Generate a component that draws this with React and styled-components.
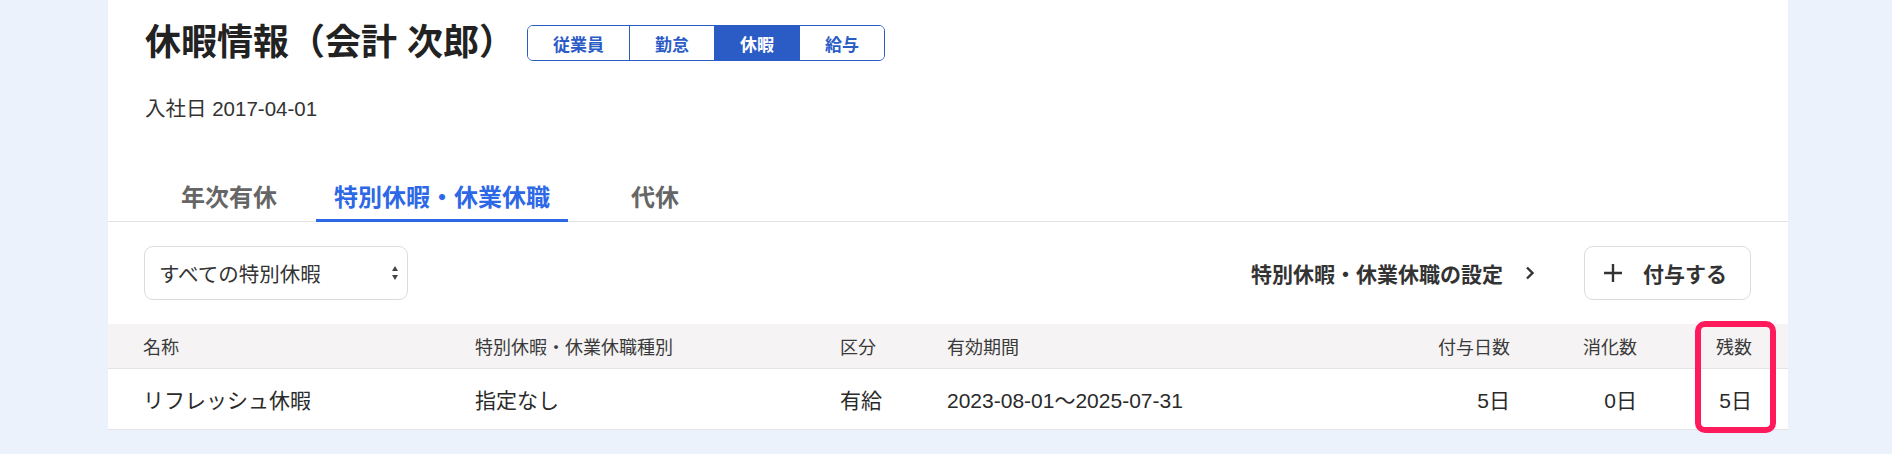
import React from "react";
import styled, { createGlobalStyle } from "styled-components";

const GlobalStyle = createGlobalStyle`
  html, body {
    margin: 0;
    padding: 0;
    background: #ebf2fc;
    font-family: "Liberation Sans", "Noto Sans CJK JP", sans-serif;
    color: #333;
  }
`;

const Page = styled.div`
  display: flex;
  padding-left: 108px;
  min-height: 454px;
  box-sizing: border-box;
`;

const Card = styled.div`
  width: 1680px;
  background: #fff;
  align-self: flex-start;
`;

const Header = styled.div`
  padding: 25px 36px 0 37px;
`;

const TitleRow = styled.div`
  display: flex;
  align-items: center;
  gap: 12px;
  height: 36px;
`;

const Title = styled.h1`
  margin: 0;
  font-size: 36px;
  line-height: 36px;
  font-weight: 700;
  color: #222;
  white-space: nowrap;
`;

const Segmented = styled.div`
  display: flex;
  height: 36px;
  box-sizing: border-box;
  border: 1px solid #2b5cc6;
  border-radius: 6px;
  overflow: hidden;
`;

const Segment = styled.div`
  display: flex;
  align-items: center;
  justify-content: center;
  padding: 0 25px;
  font-size: 17px;
  font-weight: 700;
  color: ${(p) => (p.$active ? "#fff" : "#2b5cc6")};
  background: ${(p) => (p.$active ? "#2b5cc6" : "#fff")};
  & + & {
    border-left: 1px solid #2b5cc6;
  }
`;

const JoinDate = styled.div`
  margin-top: 33px;
  font-size: 20.5px;
  line-height: 30px;
  color: #333;
`;

const Tabs = styled.div`
  display: flex;
  margin-top: 48px;
  padding-left: 34px;
  border-bottom: 1px solid #e3e3e3;
`;

const Tab = styled.div`
  min-width: 174px;
  box-sizing: border-box;
  height: 50px;
  padding: 0 18px;
  display: flex;
  align-items: center;
  justify-content: center;
  font-size: 24px;
  font-weight: 700;
  color: ${(p) => (p.$active ? "#2d68e6" : "#666")};
  border-bottom: 3px solid ${(p) => (p.$active ? "#2d68e6" : "transparent")};
  margin-bottom: -1px;
  white-space: nowrap;
`;

const Toolbar = styled.div`
  display: flex;
  align-items: center;
  padding: 24px 37px 0 36px;
`;

const Select = styled.div`
  width: 264px;
  height: 54px;
  box-sizing: border-box;
  border: 1px solid #dcdcdc;
  border-radius: 9px;
  display: flex;
  align-items: center;
  justify-content: space-between;
  padding: 0 9px 0 14px;
  font-size: 20.5px;
  color: #333;
`;

const Spacer = styled.div`
  flex: 1;
`;

const SettingsLink = styled.a`
  display: flex;
  align-items: center;
  gap: 22px;
  font-size: 21px;
  font-weight: 700;
  color: #333;
  text-decoration: none;
  margin-right: 49px;
  white-space: nowrap;
`;

const AddButton = styled.button`
  height: 54px;
  box-sizing: border-box;
  border: 1px solid #dcdcdc;
  border-radius: 9px;
  background: #fff;
  display: flex;
  align-items: center;
  gap: 20px;
  padding: 0 23px 0 18px;
  font-family: inherit;
  font-size: 21px;
  font-weight: 700;
  color: #333;
`;

const TableWrap = styled.div`
  position: relative;
  margin-top: 24px;
`;

const Row = styled.div`
  display: grid;
  grid-template-columns: 332px 365px 107px 413px 150px 127px 115px;
  padding: 0 36px 0 35px;
  align-items: center;
  height: ${(p) => (p.$head ? "44px" : "60px")};
  background: ${(p) => (p.$head ? "#f5f3f4" : "#fff")};
  border-bottom: 1px solid #e4e4e4;
  font-size: ${(p) => (p.$head ? "18px" : "21px")};
  color: ${(p) => (p.$head ? "#3a3a3a" : "#2a2a2a")};
`;

const Cell = styled.div`
  text-align: ${(p) => (p.$right ? "right" : "left")};
  white-space: nowrap;
`;

const Highlight = styled.div`
  position: absolute;
  top: -3px;
  right: 12px;
  width: 81px;
  height: 112px;
  box-sizing: border-box;
  border: 6px solid #ff1a5c;
  border-radius: 10px;
  pointer-events: none;
`;

const SelectArrows = () => (
  <svg width="6" height="14" viewBox="0 0 6 14">
    <path d="M3 0 L6 5 L0 5 Z" fill="#444" />
    <path d="M3 14 L6 9 L0 9 Z" fill="#444" />
  </svg>
);

const Chevron = () => (
  <svg width="10" height="14" viewBox="0 0 10 14">
    <path d="M2 1.5 L7.5 7 L2 12.5" fill="none" stroke="#333" strokeWidth="2.4" />
  </svg>
);

const Plus = () => (
  <svg width="20" height="20" viewBox="0 0 20 20">
    <path d="M10 1 V19 M1 10 H19" stroke="#333" strokeWidth="2.4" />
  </svg>
);

const columns = [
  { label: "名称" },
  { label: "特別休暇・休業休職種別" },
  { label: "区分" },
  { label: "有効期間" },
  { label: "付与日数", right: true },
  { label: "消化数", right: true },
  { label: "残数", right: true },
];

const rows = [
  ["リフレッシュ休暇", "指定なし", "有給", "2023-08-01～2025-07-31", "5日", "0日", "5日"],
];

export default function App() {
  return (
    <>
      <GlobalStyle />
      <Page>
        <Card>
          <Header>
            <TitleRow>
              <Title>休暇情報（会計 次郎）</Title>
              <Segmented>
                <Segment>従業員</Segment>
                <Segment>勤怠</Segment>
                <Segment $active>休暇</Segment>
                <Segment>給与</Segment>
              </Segmented>
            </TitleRow>
            <JoinDate>入社日 2017-04-01</JoinDate>
          </Header>
          <Tabs>
            <Tab>年次有休</Tab>
            <Tab $active>特別休暇・休業休職</Tab>
            <Tab>代休</Tab>
          </Tabs>
          <Toolbar>
            <Select>
              <span>すべての特別休暇</span>
              <SelectArrows />
            </Select>
            <Spacer />
            <SettingsLink href="#">
              特別休暇・休業休職の設定
              <Chevron />
            </SettingsLink>
            <AddButton>
              <Plus />
              付与する
            </AddButton>
          </Toolbar>
          <TableWrap>
            <Row $head>
              {columns.map((c) => (
                <Cell key={c.label} $right={c.right}>
                  {c.label}
                </Cell>
              ))}
            </Row>
            {rows.map((r, i) => (
              <Row key={i}>
                {r.map((v, j) => (
                  <Cell key={j} $right={columns[j].right}>
                    {v}
                  </Cell>
                ))}
              </Row>
            ))}
            <Highlight />
          </TableWrap>
        </Card>
      </Page>
    </>
  );
}
